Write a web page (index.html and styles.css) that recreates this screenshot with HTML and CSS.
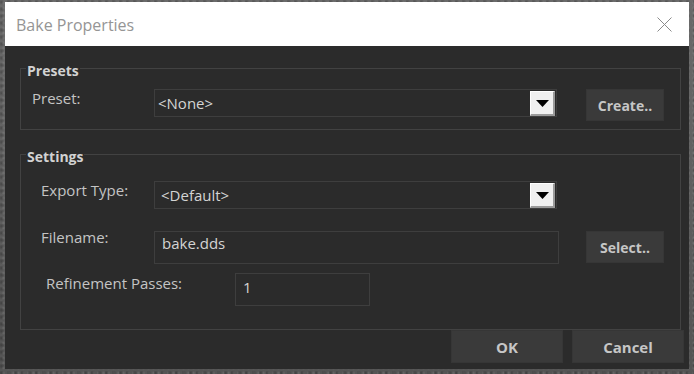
FILE: index.html
```html
<!DOCTYPE html>
<html lang="en">

<head>
    <meta charset="UTF-8">
    <meta name="viewport" content="width=device-width, initial-scale=1.0">
    <title>Bake Properties</title>
    <link rel="stylesheet" href="styles.css">
</head>

<body>

    <div class="dialog">
        <!-- Title bar -->
        <div class="titlebar">
            <span class="title">Bake Properties</span>
            <svg class="close" width="15" height="15" viewBox="0 0 15 15">
                <path d="M0.5 0.5 L14.5 14.5 M14.5 0.5 L0.5 14.5" stroke="#8a8a8a" stroke-width="1" fill="none" />
            </svg>
        </div>

        <div class="content">
            <!-- Presets group -->
            <fieldset class="group">
                <legend>Presets</legend>
                <div class="row preset-row">
                    <label class="label preset-label">Preset:</label>
                    <div class="combo combo-none">
                        <span>&lt;None&gt;</span>
                        <span class="drop">
                            <svg width="13" height="7" viewBox="0 0 13 7"><polygon points="0,0 13,0 6.5,7" fill="#000" /></svg>
                        </span>
                    </div>
                    <button class="btn side-btn">Create..</button>
                </div>
            </fieldset>

            <!-- Settings group -->
            <fieldset class="group settings">
                <legend>Settings</legend>
                <div class="row export-row">
                    <label class="label export-label">Export Type:</label>
                    <div class="combo combo-default">
                        <span>&lt;Default&gt;</span>
                        <span class="drop">
                            <svg width="13" height="7" viewBox="0 0 13 7"><polygon points="0,0 13,0 6.5,7" fill="#000" /></svg>
                        </span>
                    </div>
                </div>
                <div class="row file-row">
                    <label class="label file-label">Filename:</label>
                    <div class="field filename">bake.dds</div>
                    <button class="btn side-btn">Select..</button>
                </div>
                <div class="row passes-row">
                    <label class="label passes-label">Refinement Passes:</label>
                    <div class="field passes">1</div>
                </div>
            </fieldset>

            <!-- Dialog buttons -->
            <div class="footer">
                <button class="btn footer-btn">OK</button>
                <button class="btn footer-btn">Cancel</button>
            </div>
        </div>
    </div>

</body>

</html>
```

FILE: styles.css
```css
/* Page background behind the dialog */
body {
    margin: 0;
    padding: 2px 0 0 5px;
    height: 374px;
    box-sizing: border-box;
    overflow: hidden;
    font-family: 'Open Sans', 'Noto Sans', sans-serif;
    background-color: #5f5f5f;
    background-image:
        radial-gradient(circle at 20% 30%, rgba(0, 0, 0, 0.25) 0, transparent 3px),
        radial-gradient(circle at 70% 60%, rgba(255, 255, 255, 0.12) 0, transparent 2px),
        linear-gradient(180deg, #6a6a6a, #545454);
    background-size: 7px 7px, 5px 5px, 100% 100%;
}

/* Dialog window */
.dialog {
    width: 684px;
    height: 367px;
    display: flex;
    flex-direction: column;
    background: #2b2b2b;
}

.titlebar {
    height: 44px;
    flex: none;
    background: #fff;
    display: flex;
    align-items: center;
    justify-content: space-between;
    padding: 0 17px 0 11px;
}

.title {
    font-size: 16px;
    color: #959595;
    margin-top: 1px;
}

.close {
    display: block;
    margin-top: 1px;
}

.content {
    flex: 1;
    display: flex;
    flex-direction: column;
    padding-top: 12px;
}

/* Group boxes */
.group {
    margin: 0 8px 0 15px;
    padding: 10px 16px 8px 11px;
    border: 1px solid #424242;
    min-width: 0;
}

.group legend {
    margin-left: -6px;
    padding: 5px 1px 0 1px;
    font-size: 14px;
    line-height: 16px;
    font-weight: 700;
    color: #d2d2d2;
}

.settings {
    margin-top: 14px;
    padding: 16px 16px 23px 20px;
}

.settings legend {
    margin-left: -15px;
}

.row {
    display: flex;
    align-items: flex-start;
}

.label {
    font-size: 15px;
    line-height: 20px;
    color: #c4c4c4;
}

.preset-label {
    width: 122px;
    margin-top: -1px;
}

.export-label {
    width: 113px;
    margin-top: -1px;
}

.file-label {
    width: 113px;
    margin-top: -4px;
}

.passes-label {
    width: 189px;
    margin-left: 5px;
}

/* Combo boxes */
.combo {
    width: 403px;
    height: 28px;
    box-sizing: border-box;
    border: 1px solid #3e3e3e;
    display: flex;
    align-items: center;
    justify-content: space-between;
    padding: 0 1px 0 3px;
    font-size: 15px;
    color: #d4d4d4;
}

.combo-default {
    padding-left: 6px;
}

.drop {
    width: 25px;
    height: 25px;
    box-sizing: border-box;
    background: #f0f0f0;
    border-top: 1px solid #fff;
    border-left: 1px solid #fff;
    border-right: 2px solid #9a9a9a;
    border-bottom: 2px solid #9a9a9a;
    display: flex;
    align-items: center;
    justify-content: center;
    padding-top: 1px;
}

.drop svg {
    display: block;
}

/* Text fields */
.field {
    height: 33px;
    box-sizing: border-box;
    border: 1px solid #3e3e3e;
    font-size: 15px;
    line-height: 20px;
    color: #d4d4d4;
}

.filename {
    width: 405px;
    padding: 1px 0 0 7px;
}

.passes {
    width: 135px;
    padding: 3px 0 0 7px;
}

.export-row {
    margin-bottom: 22px;
}

.file-row {
    margin-bottom: 9px;
}

/* Buttons */
.btn {
    font-family: 'Open Sans', 'Noto Sans', sans-serif;
    font-size: 14px;
    font-weight: 700;
    color: #c6c6c6;
    background: #3a3a3a;
    border: 1px solid #363636;
    padding: 0;
    cursor: pointer;
}

.side-btn {
    width: 78px;
    height: 32px;
    margin-left: auto;
}

.footer {
    display: flex;
    justify-content: flex-end;
    gap: 9px;
    padding-right: 5px;
}

.footer-btn {
    width: 112px;
    height: 33px;
    font-size: 15px;
}
```
